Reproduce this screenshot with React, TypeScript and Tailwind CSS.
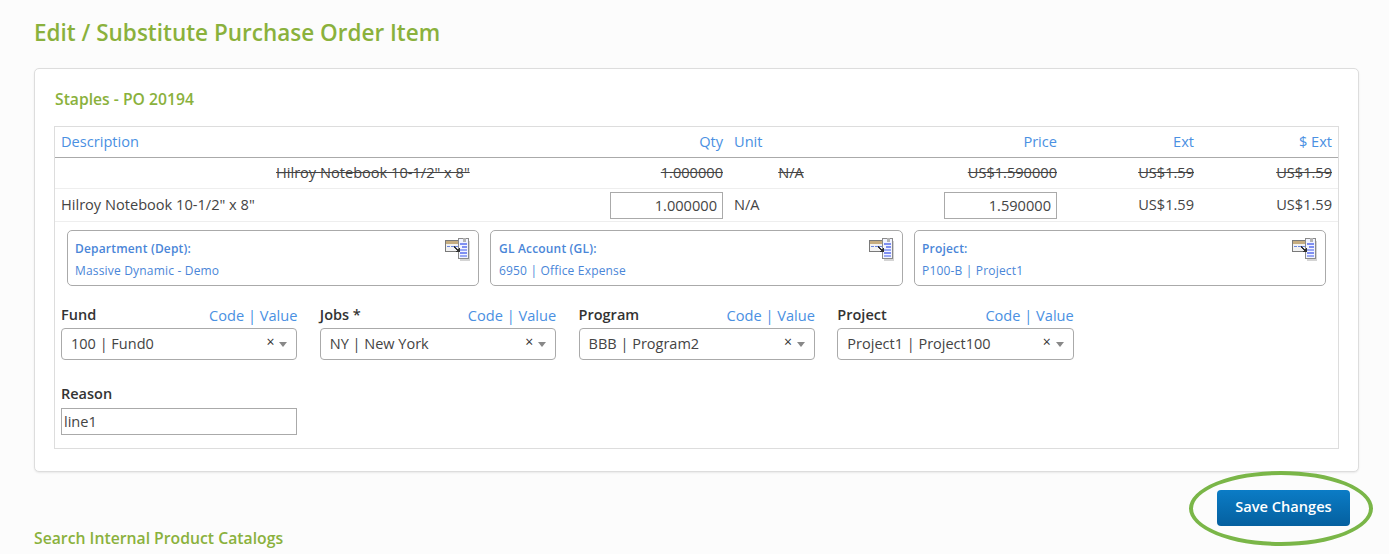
const font = { fontFamily: '"Open Sans", sans-serif' };

function FieldIcon() {
  return (
    <svg width="26" height="25" viewBox="0 0 26 25" shapeRendering="crispEdges" className="absolute top-[6px] right-[7px]">
      <rect x="15" y="4" width="10" height="20" fill="#d4d4d4" />
      <rect x="0" y="3" width="17" height="12" fill="#7a7a7a" />
      <rect x="1" y="4" width="15" height="3" fill="#c6ad80" />
      <rect x="1" y="7" width="15" height="7" fill="#f2f2f2" />
      <rect x="2" y="9" width="3" height="1" fill="#6b86dd" />
      <rect x="6" y="9" width="3" height="1" fill="#6b86dd" />
      <rect x="10" y="9" width="3" height="1" fill="#6b86dd" />
      <rect x="13" y="1" width="11" height="21" fill="#8a8a8a" />
      <rect x="14" y="2" width="9" height="19" fill="#f2f4ff" />
      <rect x="18" y="1" width="3" height="4" fill="#b4b4b4" />
      <rect x="15" y="6" width="7" height="2" fill="#7f8ff2" />
      <rect x="17" y="9" width="5" height="2" fill="#7f8ff2" />
      <rect x="15" y="12" width="7" height="2" fill="#9aa8f5" />
      <rect x="15" y="15" width="7" height="2" fill="#7f8ff2" />
      <rect x="15" y="18" width="7" height="2" fill="#9aa8f5" />
      <path d="M9 9 L13 12 L15 11 L15 15 L11 15 L12 13 L8 10 Z" fill="#333333" />
    </svg>
  );
}

function InfoBox({ label, value, w, pl }: { label: string; value: string; w: string; pl: string }) {
  return (
    <div className={`relative h-[56px] rounded-[5px] border border-[#aaaaaa] pt-[9px] text-[12px] tracking-[0.18px] text-[#4a86d8] ${pl} ${w}`}>
      <div className="font-semibold leading-[17px]">{label}</div>
      <div className="mt-[5px] leading-[17px]">{value}</div>
      <FieldIcon />
    </div>
  );
}

function Picker({ label, value }: { label: string; value: string }) {
  return (
    <div className="w-[236.4px]">
      <div className="flex h-[22px] items-center justify-between leading-[22px]">
        <span className="text-[14.5px] font-semibold text-[#333333]">{label}</span>
        <span className="text-[14.6px] text-[#4a90e2]">Code | Value</span>
      </div>
      <div className="mt-[2px] flex h-[32px] items-center rounded-[4px] border border-[#aaaaaa] bg-white pl-[9px] pr-[9px] text-[14.5px] text-[#444444]">
        <span className="flex-1">{value}</span>
        <span className="mr-[5px] mb-[5px] text-[14px] leading-none text-[#333333]">×</span>
        <span className="h-0 w-0 border-x-[4px] border-t-[5px] border-x-transparent border-t-[#888888]" />
      </div>
    </div>
  );
}

export default function App() {
  return (
    <div style={font} className="relative h-[554px] overflow-hidden bg-[#fcfcfc] pl-[34px] pr-[30px]">
      <h1 className="pt-[18px] text-[22.5px] font-semibold leading-[30px] text-[#8ab13c]">Edit / Substitute Purchase Order Item</h1>

      <div className="mt-[20px] h-[404px] rounded-[5px] border border-[#dddddd] bg-white px-[19px] pt-[19px] shadow-[0_1px_2px_rgba(0,0,0,0.08)]">
        <h2 className="pl-[1px] text-[15.7px] font-semibold leading-[22px] text-[#8ab13c]">Staples - PO 20194</h2>

        <div className="mt-[16px] h-[323px] border border-[#dddddd] text-[14.6px] text-[#444444]">
          <div className="box-content flex h-[30px] items-center border-b border-[#aaaaaa] text-[#4a90e2]">
            <div className="mb-[1px] w-[549px] pl-[6px]">Description</div>
            <div className="mb-[1px] w-[125px] pr-[6px] text-right">Qty</div>
            <div className="mb-[1px] w-[124px] pl-[5px]">Unit</div>
            <div className="mb-[1px] w-[210px] pr-[6px] text-right">Price</div>
            <div className="mb-[1px] w-[137px] pr-[6px] text-right">Ext</div>
            <div className="mb-[1px] w-[138px] pr-[6px] text-right">$ Ext</div>
          </div>
          <div className="box-content flex h-[30px] items-center border-b border-[#eeeeee] line-through">
            <div className="mb-[1px] w-[549px] pl-[221px]">Hilroy Notebook 10-1/2" x 8"</div>
            <div className="mb-[1px] w-[125px] pr-[6px] text-right">1.000000</div>
            <div className="mb-[1px] w-[124px] text-center">N/A</div>
            <div className="mb-[1px] w-[210px] pr-[6px] text-right">US$1.590000</div>
            <div className="mb-[1px] w-[137px] pr-[6px] text-right">US$1.59</div>
            <div className="mb-[1px] w-[138px] pr-[6px] text-right">US$1.59</div>
          </div>
          <div className="box-content flex h-[32px] items-center border-b border-[#eeeeee]">
            <div className="mb-[1px] w-[549px] pl-[6px]">Hilroy Notebook 10-1/2" x 8"</div>
            <div className="flex w-[125px] justify-end pr-[6px]">
              <div className="h-[27px] w-[113px] border border-[#aaaaaa] bg-white pr-[5px] text-right leading-[24px]">1.000000</div>
            </div>
            <div className="mb-[1px] w-[124px] pl-[5px]">N/A</div>
            <div className="flex w-[210px] justify-end pr-[6px]">
              <div className="h-[27px] w-[113px] border border-[#aaaaaa] bg-white pr-[5px] text-right leading-[24px]">1.590000</div>
            </div>
            <div className="mb-[1px] w-[137px] pr-[6px] text-right">US$1.59</div>
            <div className="mb-[1px] w-[138px] pr-[6px] text-right">US$1.59</div>
          </div>

          <div className="flex gap-[11px] pl-[12px] pt-[8px]">
            <InfoBox label="Department (Dept):" value="Massive Dynamic - Demo" w="w-[412px]" pl="pl-[7px]" />
            <InfoBox label="GL Account (GL):" value="6950 | Office Expense" w="w-[413px]" pl="pl-[8px]" />
            <InfoBox label="Project:" value="P100-B | Project1" w="w-[412px]" pl="pl-[7px]" />
          </div>

          <div className="flex gap-[22.4px] pl-[6px] pt-[18px]">
            <Picker label="Fund" value="100 | Fund0" />
            <Picker label="Jobs *" value="NY | New York" />
            <Picker label="Program" value="BBB | Program2" />
            <Picker label="Project" value="Project1 | Project100" />
          </div>

          <div className="pl-[6px] pt-[23px]">
            <div className="text-[14.5px] font-semibold leading-[22px] text-[#333333]">Reason</div>
            <div className="mt-[3px] h-[27px] w-[236px] border border-[#aaaaaa] bg-white pl-[2px] leading-[24px]">line1</div>
          </div>
        </div>
      </div>

      <div className="mt-[18px] flex justify-end pr-[9px]">
        <button className="h-[36px] w-[133px] rounded-[4px] bg-gradient-to-b from-[#0b7cc6] to-[#05609f] pb-[2px] text-[14.6px] font-semibold text-white">Save Changes</button>
      </div>
      <h3 className="mt-[1px] text-[15.75px] font-semibold leading-[22px] text-[#8ab13c]">Search Internal Product Catalogs</h3>

      <div className="pointer-events-none absolute left-[1189px] top-[471px] h-[75px] w-[184px] rounded-[50%] border-4 border-[#7ab648]" />
    </div>
  );
}
